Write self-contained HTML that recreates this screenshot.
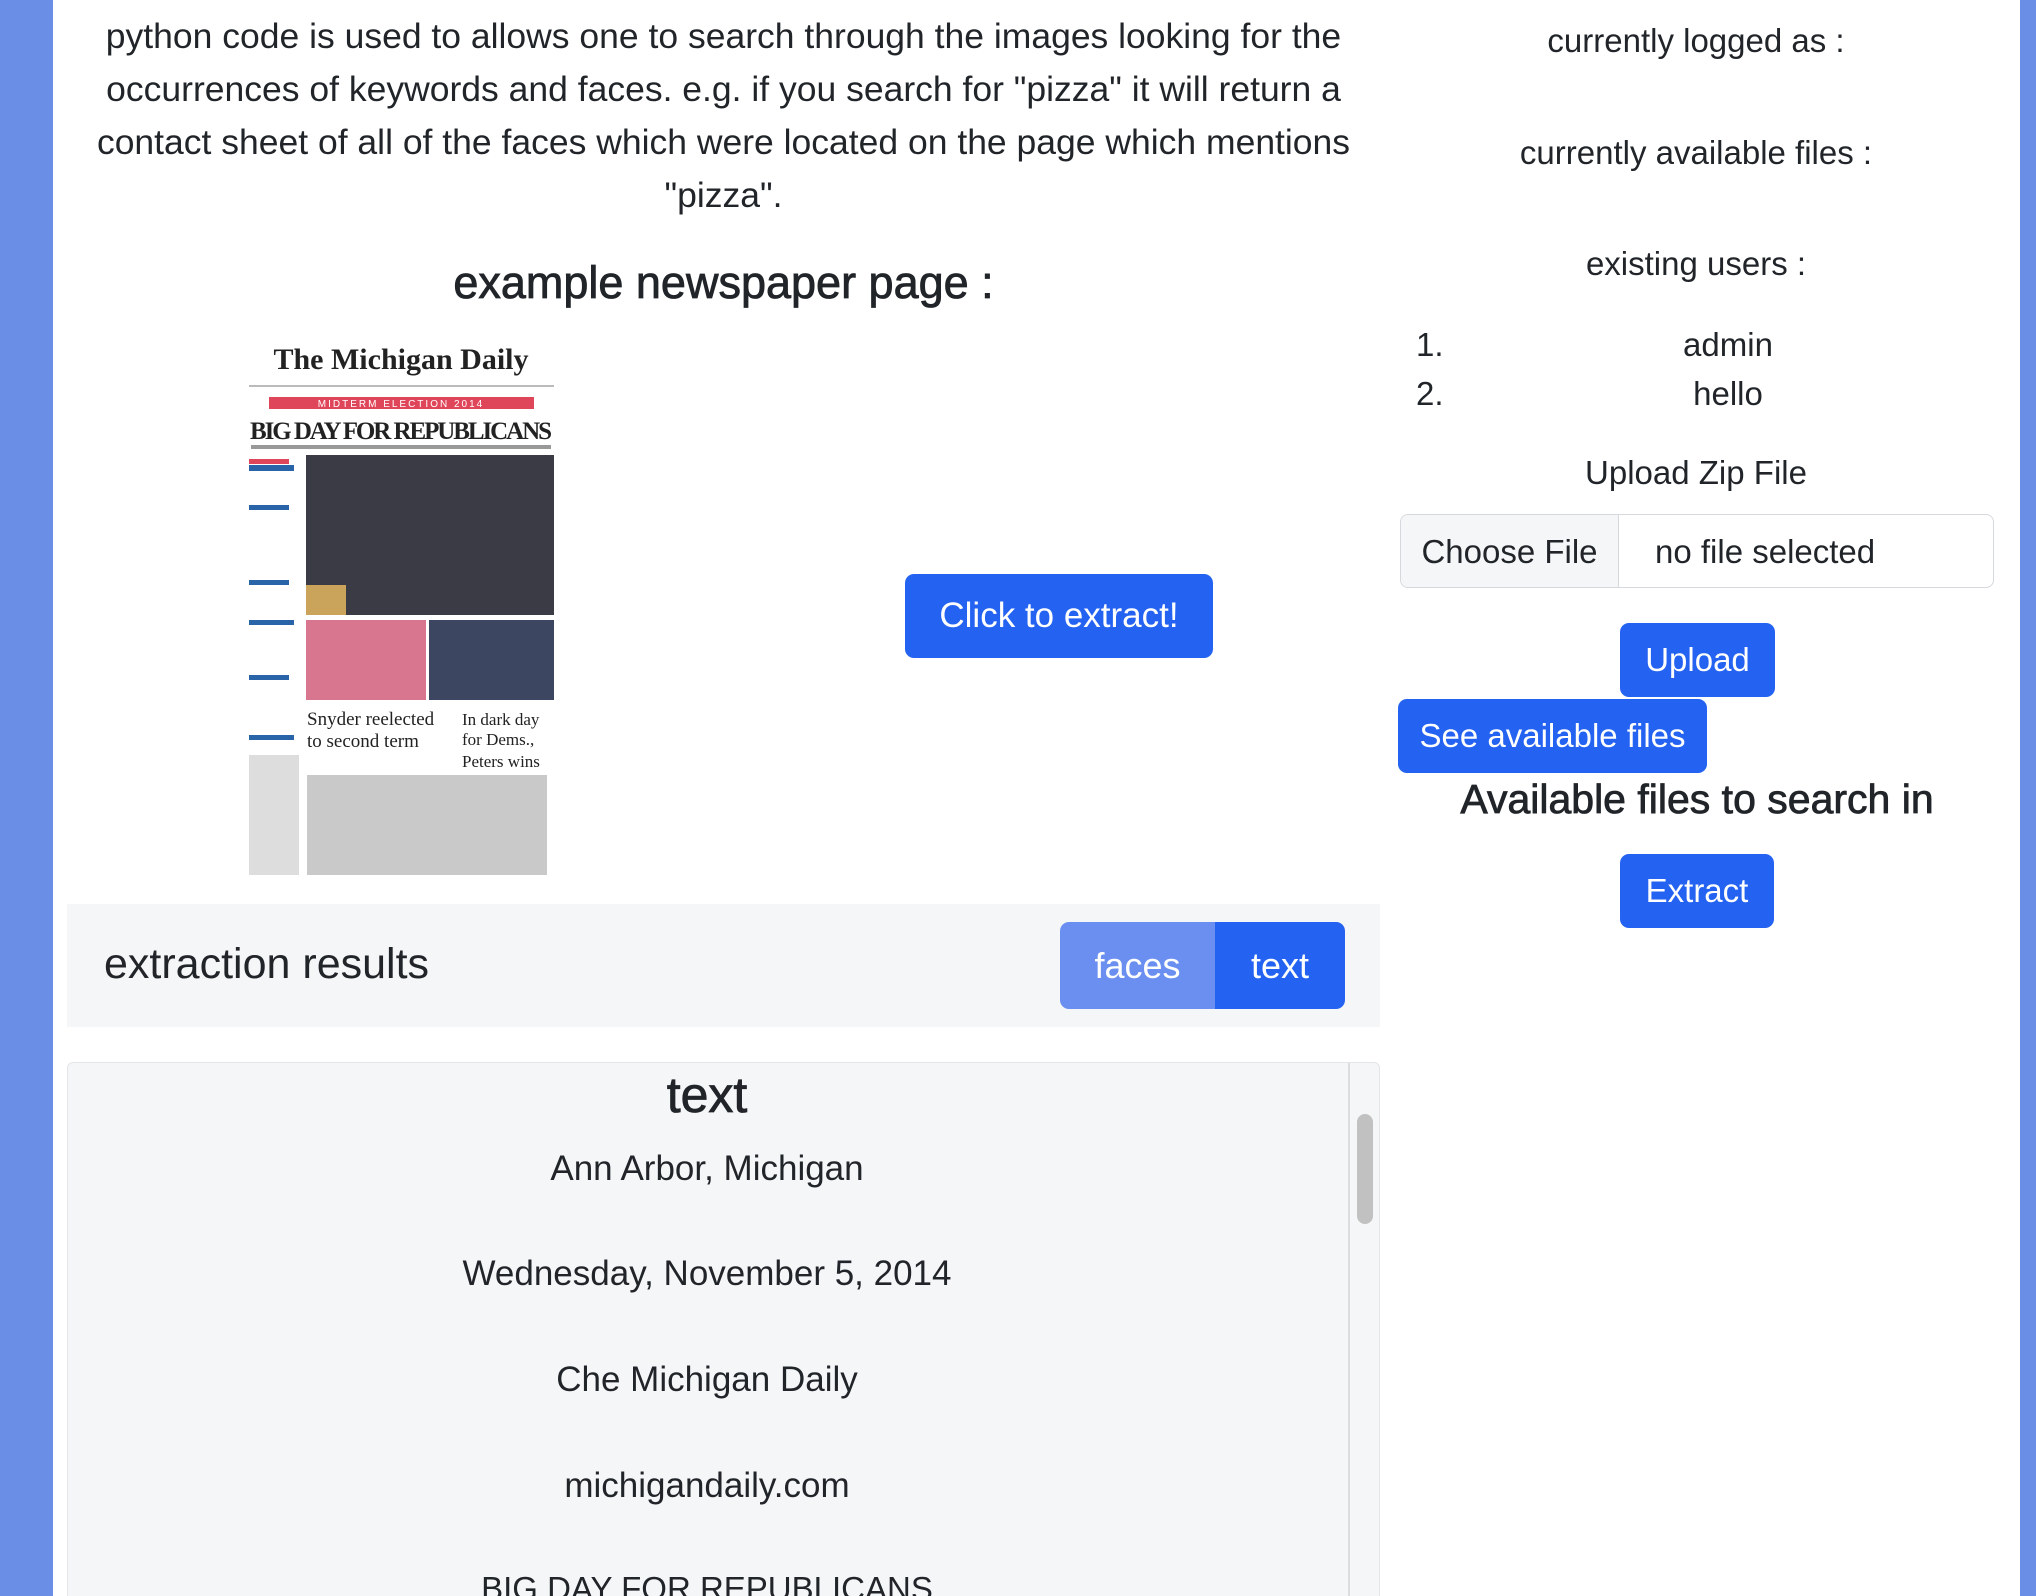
<!DOCTYPE html>
<html style="overflow:hidden"><head><meta charset="utf-8"><style>
*{margin:0;padding:0;box-sizing:border-box}
html,body{width:2036px;height:1596px;overflow:hidden}
body{background:#fff;font-family:"Liberation Sans",Arial,sans-serif;color:#212529;position:relative}
.a{position:absolute}
.c{text-align:center;white-space:nowrap}
.m{-webkit-text-stroke:0.8px #212529}
.btn{position:absolute;background:#2462f2;color:#fff;border-radius:9px;display:flex;align-items:center;justify-content:center;font-size:33px}
</style></head><body>
<div class="a" style="left:0;top:0;width:53px;height:1596px;background:#6a8de6"></div>
<div class="a" style="left:2020px;top:0;width:16px;height:1596px;background:#6a8de6"></div>

<div class="a c" style="left:67px;width:1313px;top:10px;font-size:35.5px;line-height:53px">python code is used to allows one to search through the images looking for the<br>occurrences of keywords and faces. e.g. if you search for "pizza" it will return a<br>contact sheet of all of the faces which were located on the page which mentions<br>"pizza".</div>
<div class="a c m" style="left:67px;width:1313px;top:257px;font-size:45px">example newspaper page :</div>

<svg class="a" style="left:249px;top:335px" width="305" height="556" viewBox="0 0 305 556">
<rect width="305" height="556" fill="#fff"/>
<text x="152" y="34" text-anchor="middle" font-family="Liberation Serif" font-weight="bold" font-size="30" fill="#222">The Michigan Daily</text>
<rect x="0" y="50" width="305" height="2" fill="#bbb"/>
<rect x="20" y="62" width="265" height="12" fill="#e0465a"/>
<text x="152" y="72" text-anchor="middle" font-size="10" fill="#fff" letter-spacing="2">MIDTERM ELECTION 2014</text>
<text x="152" y="104" text-anchor="middle" font-family="Liberation Serif" font-weight="bold" font-size="25" fill="#222" textLength="302">BIG DAY FOR REPUBLICANS</text>
<rect x="2" y="110" width="300" height="4" fill="#999"/>
<rect x="57" y="120" width="248" height="160" fill="#3a3b45"/>
<rect x="57" y="250" width="40" height="30" fill="#c9a45a"/>
<rect x="57" y="285" width="120" height="80" fill="#d87690"/>
<rect x="180" y="285" width="125" height="80" fill="#3c4660"/>
<g fill="#2a64a8"><rect x="0" y="130" width="45" height="6"/><rect x="0" y="170" width="40" height="5"/><rect x="0" y="245" width="40" height="5"/><rect x="0" y="285" width="45" height="5"/><rect x="0" y="340" width="40" height="5"/><rect x="0" y="400" width="45" height="5"/></g>
<g fill="#e0465a"><rect x="0" y="124" width="40" height="5"/></g>
<text x="58" y="390" font-family="Liberation Serif" font-size="19" fill="#222">Snyder reelected</text>
<text x="58" y="412" font-family="Liberation Serif" font-size="19" fill="#222">to second term</text>
<text x="213" y="390" font-family="Liberation Serif" font-size="17" fill="#222">In dark day</text>
<text x="213" y="410" font-family="Liberation Serif" font-size="17" fill="#222">for Dems.,</text>
<text x="213" y="432" font-family="Liberation Serif" font-size="17" fill="#222">Peters wins</text>
<g fill="#bbb"><rect x="58" y="440" width="240" height="100" opacity=".8"/></g>
<g fill="#ddd"><rect x="0" y="420" width="50" height="120"/></g>
</svg>

<div class="btn" style="left:905px;top:574px;width:308px;height:84px;font-size:35px">Click to extract!</div>

<div class="a" style="left:67px;top:904px;width:1313px;height:123px;background:#f5f6f8"></div>
<div class="a" style="left:104px;top:940px;font-size:43px">extraction results</div>
<div class="btn" style="left:1060px;top:922px;width:155px;height:87px;background:#6a8ff0;border-radius:9px 0 0 9px;font-size:36px">faces</div>
<div class="btn" style="left:1215px;top:922px;width:130px;height:87px;border-radius:0 9px 9px 0;font-size:36px">text</div>

<div class="a" style="left:67px;top:1062px;width:1313px;height:534px;background:#f5f6f8;border:1px solid #e3e5e8;border-bottom:none;border-radius:6px 6px 0 0"></div>
<div class="a" style="left:1348px;top:1063px;width:2px;height:533px;background:#ddd"></div>
<div class="a" style="left:1357px;top:1114px;width:16px;height:110px;background:#c1c1c1;border-radius:8px"></div>
<div class="a c m" style="left:67px;width:1280px;top:1066px;font-size:50px">text</div>
<div class="a c" style="left:67px;width:1280px;top:1148px;font-size:35px;line-height:42px">Ann Arbor, Michigan</div>
<div class="a c" style="left:67px;width:1280px;top:1253px;font-size:35px;line-height:42px">Wednesday, November 5, 2014</div>
<div class="a c" style="left:67px;width:1280px;top:1359px;font-size:35px;line-height:42px">Che Michigan Daily</div>
<div class="a c" style="left:67px;width:1280px;top:1465px;font-size:35px;line-height:42px">michigandaily.com</div>
<div class="a c" style="left:67px;width:1280px;top:1568px;font-size:33px;line-height:42px">BIG DAY FOR REPUBLICANS</div>

<div class="a c" style="left:1381px;width:630px;top:22px;font-size:33px">currently logged as :</div>
<div class="a c" style="left:1381px;width:630px;top:134px;font-size:33px">currently available files :</div>
<div class="a c" style="left:1381px;width:630px;top:245px;font-size:33px">existing users :</div>
<div class="a" style="left:1416px;top:326px;font-size:33px">1.</div>
<div class="a" style="left:1416px;top:375px;font-size:33px">2.</div>
<div class="a c" style="left:1628px;width:200px;top:326px;font-size:33px">admin</div>
<div class="a c" style="left:1628px;width:200px;top:375px;font-size:33px">hello</div>
<div class="a c" style="left:1381px;width:630px;top:454px;font-size:33px">Upload Zip File</div>
<div class="a" style="left:1400px;top:514px;width:594px;height:74px;border:1.5px solid #d5d8dc;border-radius:8px;overflow:hidden;font-size:33px">
<div class="a" style="left:0;top:0;width:218px;height:74px;background:#f5f6f8;border-right:1.5px solid #d5d8dc;display:flex;align-items:center;justify-content:center">Choose File</div>
<div class="a" style="left:254px;top:18px">no file selected</div>
</div>
<div class="btn" style="left:1620px;top:623px;width:155px;height:74px">Upload</div>
<div class="btn" style="left:1398px;top:699px;width:309px;height:74px">See available files</div>
<div class="a c m" style="left:1381px;width:632px;top:776px;font-size:41px">Available files to search in</div>
<div class="btn" style="left:1620px;top:854px;width:154px;height:74px">Extract</div>
</body></html>
